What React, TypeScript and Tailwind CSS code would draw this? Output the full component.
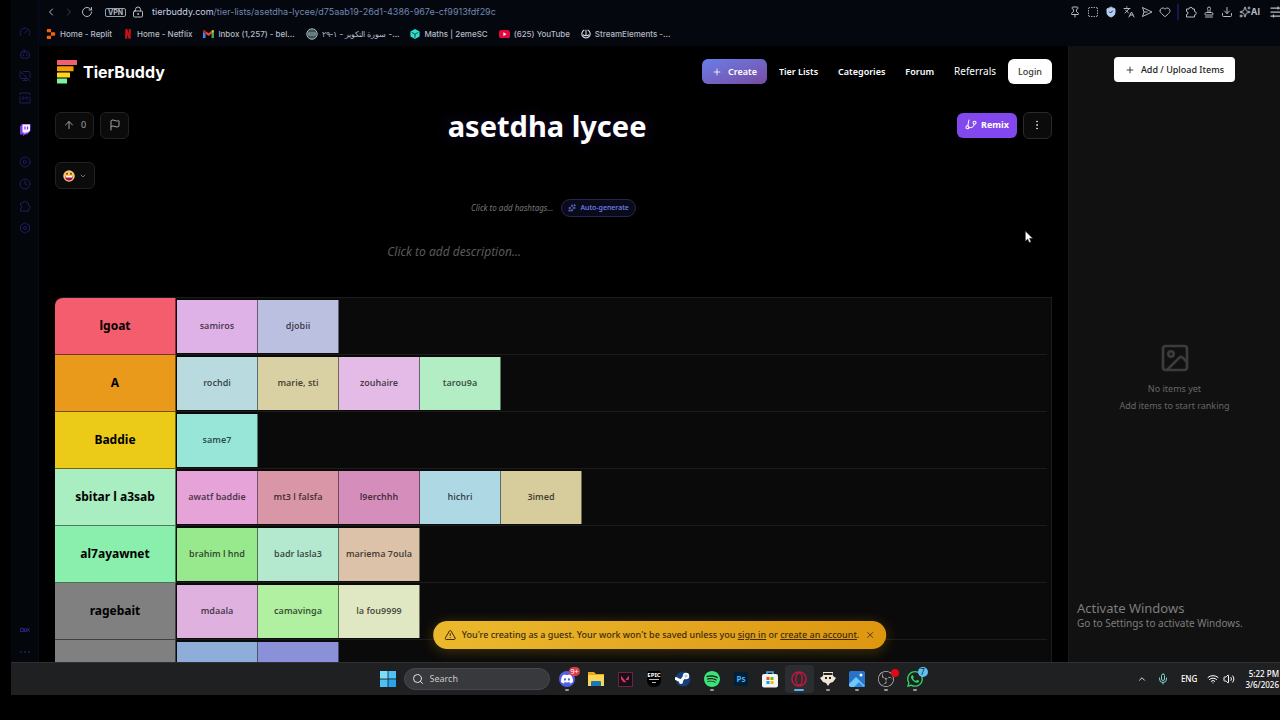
import type { ReactNode } from "react";
import {
  AlertTriangle,
  ArrowUp,
  Bot,
  ChevronDown,
  ChevronLeft,
  ChevronRight,
  ChevronUp,
  CirclePlay,
  Clock,
  Download,
  EllipsisVertical,
  Flag,
  Gauge,
  GitBranch,
  Heart,
  Hexagon,
  Image as ImageIcon,
  Languages,
  LockKeyhole,
  Mic,
  MonitorOff,
  Pin,
  Plus,
  RotateCw,
  Search,
  ShieldCheck,
  Sparkles,
  SquareDashed,
  Stamp,
  Volume2,
  Wifi,
  X,
} from "lucide-react";
import { SiDiscord, SiNetflix, SiObsstudio, SiReplit, SiSpotify, SiValorant, SiWhatsapp } from "react-icons/si";

interface TierItem {
  name: string;
  color: string;
}

interface Tier {
  label: string;
  color: string;
  items: TierItem[];
}

const tiers: Tier[] = [
  {
    label: "lgoat",
    color: "bg-[#f45d6d]",
    items: [
      { name: "samiros", color: "bg-[#deb2e6]" },
      { name: "djobii", color: "bg-[#bcc0e0]" },
    ],
  },
  {
    label: "A",
    color: "bg-[#ea9a1a]",
    items: [
      { name: "rochdi", color: "bg-[#b9dbe0]" },
      { name: "marie, sti", color: "bg-[#d9d0a3]" },
      { name: "zouhaire", color: "bg-[#e3bbe6]" },
      { name: "tarou9a", color: "bg-[#b2edc4]" },
    ],
  },
  {
    label: "Baddie",
    color: "bg-[#eccb18]",
    items: [{ name: "same7", color: "bg-[#97e6d8]" }],
  },
  {
    label: "sbitar l a3sab",
    color: "bg-[#a8eec1]",
    items: [
      { name: "awatf baddie", color: "bg-[#e5a3d8]" },
      { name: "mt3 l falsfa", color: "bg-[#d996a6]" },
      { name: "l9erchhh", color: "bg-[#d58dbb]" },
      { name: "hichri", color: "bg-[#aed9e4]" },
      { name: "3imed", color: "bg-[#d6cc9c]" },
    ],
  },
  {
    label: "al7ayawnet",
    color: "bg-[#8aefac]",
    items: [
      { name: "brahim l hnd", color: "bg-[#98e98e]" },
      { name: "badr lasla3", color: "bg-[#b4e9d0]" },
      { name: "mariema 7oula", color: "bg-[#dcc2a8]" },
    ],
  },
  {
    label: "ragebait",
    color: "bg-[#808080]",
    items: [
      { name: "mdaala", color: "bg-[#dfb1df]" },
      { name: "camavinga", color: "bg-[#b0f0a0]" },
      { name: "la fou9999", color: "bg-[#dfe8c2]" },
    ],
  },
  {
    label: "allib",
    color: "bg-[#808080]",
    items: [
      { name: "", color: "bg-[#8fadd9]" },
      { name: "", color: "bg-[#8b91d9]" },
    ],
  },
];

function GmailIcon() {
  return (
    <svg viewBox="0 0 24 18" className="w-[11px]">
      <path d="M0 3v13.500a1.500 1.500 0 0 0 1.500 1.500H5.500V7.500z" fill="#4285f4" />
      <path d="M24 3v13.500a1.500 1.500 0 0 1-1.500 1.500H18.500V7.500z" fill="#34a853" />
      <path d="M5.500 2v6L12 13l6.500-5V2L12 7z" fill="#ea4335" />
      <path d="M0 3c0-3 3-4 5.500-1.500V8L0 4z" fill="#c5221f" />
      <path d="M24 3c0-3-3-4-5.500-1.500V8L24 4z" fill="#fbbc04" />
    </svg>
  );
}

function SiteIcon() {
  return (
    <svg viewBox="0 0 24 24" className="size-3">
      <circle cx="12" cy="12" r="10.500" fill="#3d5257" stroke="#a9b3b3" strokeWidth="2" />
      <path d="M5 9h14v6H5z" fill="#97aaaf" />
      <path d="M7 12h10" stroke="#334448" strokeWidth="2" />
    </svg>
  );
}

function CubeIcon() {
  return (
    <svg viewBox="0 0 24 24" className="size-2.5">
      <path d="M12 0l11 6v12l-11 6-11-6V6z" fill="#2de0cf" />
      <path d="M4 8l8 4.500L20 8M12 12.500V21" stroke="#06302f" strokeWidth="2" fill="none" />
    </svg>
  );
}

function YoutubeIcon() {
  return (
    <svg viewBox="0 0 24 18" className="w-[11px]">
      <rect width="24" height="18" rx="5" fill="#e4063c" />
      <path d="M9.500 5v8l7-4z" fill="#fff" />
    </svg>
  );
}

function StreamElementsIcon() {
  return (
    <svg viewBox="0 0 24 24" className="size-2.5" fill="none" stroke="#e5e7eb" strokeWidth="2.500">
      <path d="M8 2.500a10 10 0 1 0 8 0M12 2v13M5 13c2 4 12 4 14 0" />
    </svg>
  );
}

const bookmarks: { title: string; icon: ReactNode }[] = [
  { title: "Home - Replit", icon: <SiReplit className="size-2.5 text-[#f26207]" /> },
  { title: "Home - Netflix", icon: <SiNetflix className="size-2.5 text-[#d3101b]" /> },
  { title: "Inbox (1,257) - bel...", icon: <GmailIcon /> },
  { title: "سورة التكوير - ١-٢٩ -...", icon: <SiteIcon /> },
  { title: "Maths | 2emeSC", icon: <CubeIcon /> },
  { title: "(625) YouTube", icon: <YoutubeIcon /> },
  { title: "StreamElements -...", icon: <StreamElementsIcon /> },
];

function TwitchIcon() {
  return (
    <svg viewBox="0 0 24 24" className="size-3">
      <path d="M2 5l4-5h17v14l-7 7h-4l-4 3v-3H2z" fill="#7c3aed" />
      <path d="M7 1h15v12l-4 4h-4l-3 3v-3H7z" fill="#f5f0ff" />
      <path d="M12 5v6M17 5v6" stroke="#7c3aed" strokeWidth="2.500" />
    </svg>
  );
}

function MediumBoxIcon() {
  return (
    <svg viewBox="0 0 24 24" className="size-3" fill="none" stroke="currentColor" strokeWidth="2">
      <path d="M2 6V2h20v4M2 9v13h20V9M8 16V9l4 4 4-4v7" />
    </svg>
  );
}

function ExtensionIcon() {
  return (
    <svg viewBox="0 0 24 24" className="size-3" fill="none" stroke="currentColor" strokeWidth="2" strokeLinejoin="round">
      <path d="M3 6h5a3.500 3.500 0 0 1 7 0h4v5a3.500 3.500 0 0 1 0 7v4H3v-5a3 3 0 0 0 0-6z" />
    </svg>
  );
}

function SendIcon() {
  return (
    <svg viewBox="0 0 24 24" className="size-3" fill="none" stroke="currentColor" strokeWidth="2" strokeLinejoin="round">
      <path d="M3 3l19 9-19 9 3-9zM6 12h7" />
    </svg>
  );
}

function MenuIcon() {
  return (
    <svg viewBox="0 0 24 24" className="size-3" fill="none" stroke="currentColor" strokeWidth="2.500">
      <path d="M1 4h22M1 12h22M1 20h22M16 1v6M7 17v6" />
    </svg>
  );
}

function SideBar() {
  return (
    <aside className="flex w-7 shrink-0 flex-col items-center gap-2.5 border-r border-[#080a20] bg-[#03060b] pt-[26px] pb-1 text-[#241a63]">
      <Gauge className="size-3" />
      <Bot className="size-3" />
      <MonitorOff className="size-3" />
      <MediumBoxIcon />
      <div className="my-2.5">
        <TwitchIcon />
      </div>
      <CirclePlay className="size-3" />
      <Clock className="size-3" />
      <ExtensionIcon />
      <div className="relative size-3">
        <Hexagon className="size-3" />
        <span className="absolute inset-1 rounded-full border border-[#241a63]" />
      </div>
      <svg viewBox="0 0 24 12" className="mt-auto h-3 w-2.5" fill="none" stroke="#3a2a9c" strokeWidth="2">
        <path d="M1 2h7v8H1zM11 2v8h4V2M17 2l6 8M23 2l-6 8" />
      </svg>
      <svg viewBox="0 0 12 12" className="size-3" fill="#3a2a9c">
        <circle cx="2" cy="6" r="0.800" />
        <circle cx="6" cy="6" r="0.800" />
        <circle cx="10" cy="6" r="0.800" />
      </svg>
    </aside>
  );
}

function BrowserBar() {
  return (
    <header className="overflow-hidden bg-[#04080e] pt-0.5 pb-0.5 font-[Inter,'Noto_Sans',sans-serif] text-[#b6bac4]">
      <div className="flex h-5 items-center pl-1.5">
        <div className="flex items-center gap-1.5">
          <ChevronLeft className="size-3" />
          <ChevronRight className="size-3 text-[#3b3f48]" />
          <RotateCw className="size-3" />
        </div>
        <span className="ml-3 rounded-xs border border-[#9ca0aa] px-0.5 text-[7px] leading-[7px] font-bold">VPN</span>
        <LockKeyhole className="ml-1.5 size-3" />
        <span className="ml-2 text-[9px] whitespace-nowrap text-[#7286b0]">
          <span className="text-[#c9d2e4]">tierbuddy.com</span>/tier-lists/asetdha-lycee/d75aab19-26d1-4386-967e-cf9913fdf29c
        </span>
        <div className="ml-auto flex items-center gap-1.5">
          <Pin className="size-3" />
          <SquareDashed className="size-3" />
          <ShieldCheck className="size-3 fill-[#b4cdf0] text-[#b4cdf0] [&>path:last-child]:stroke-[#123]" />
          <Languages className="size-3" />
          <SendIcon />
          <Heart className="size-3" />
          <span className="h-4 w-0.5 bg-[#1d1550]" />
          <ExtensionIcon />
          <Stamp className="size-3" />
          <Download className="size-3" />
          <span className="flex items-center text-[9px] font-bold">
            <Sparkles className="size-3" />
            AI
          </span>
          <span className="ml-1 w-2.5 overflow-hidden">
            <MenuIcon />
          </span>
        </div>
      </div>
      <nav className="mt-0.5 flex h-5 items-center gap-[11px] pl-[7px] text-[8px] font-medium whitespace-nowrap">
        {bookmarks.map((b) => (
          <a key={b.title} href="#" className="flex items-center gap-1">
            {b.icon}
            <span>{b.title}</span>
          </a>
        ))}
      </nav>
    </header>
  );
}

function Logo() {
  return (
    <a href="#" className="flex items-center gap-1.5 pl-0.5 font-[Inter,sans-serif] text-[16px] leading-6 font-bold text-white">
      <svg viewBox="0 0 20 24" className="h-6 w-5">
        <rect y="0" width="20" height="5" rx="0.500" fill="#f0606e" />
        <rect y="6.200" width="16.500" height="5" rx="0.500" fill="#f59e0b" />
        <rect y="12.400" width="13" height="5" rx="0.500" fill="#fcd71c" />
        <rect y="18.600" width="10" height="5" rx="0.500" fill="#7df29b" />
      </svg>
      TierBuddy
    </a>
  );
}

function NavBar() {
  return (
    <div className="flex items-center justify-between">
      <Logo />
      <nav className="flex items-center gap-3 text-[9px] font-semibold text-white">
        <button className="flex h-[25px] items-center gap-1.5 rounded-md bg-linear-to-br from-[#667eea] to-[#764ba2] px-2.5">
          <Plus className="size-2.5" />
          Create
        </button>
        <div className="flex items-center gap-5">
          <a href="#">Tier Lists</a>
          <a href="#">Categories</a>
          <a href="#">Forum</a>
          <a href="#" className="text-[10px] font-normal">
            Referrals
          </a>
        </div>
        <button className="h-[25px] rounded-md bg-white px-2.5 font-medium text-[#333]">Login</button>
      </nav>
    </div>
  );
}

function TierRow({ tier }: { tier: Tier }) {
  return (
    <div className="flex h-[57px] shrink-0">
      <div className={`flex w-[121px] shrink-0 items-center justify-center border-b border-r border-black/50 text-[12px] font-bold text-black ${tier.color}`}>
        {tier.label}
      </div>
      <div className="flex flex-1 items-center border-b border-[#1c1c1c] pl-px">
        {tier.items.map((item, i) => (
          <div key={i} className={`flex h-[53px] w-[81px] items-center justify-center border-r border-black/50 text-[9px] font-semibold whitespace-nowrap text-black/70 ${item.color}`}>
            {item.name}
          </div>
        ))}
      </div>
    </div>
  );
}

function Editor() {
  return (
    <main className="flex min-w-0 flex-1 flex-col overflow-hidden bg-black px-4 pt-[13px]">
      <NavBar />
      <div className="mt-5 flex items-center justify-between text-[9px]">
        <div className="flex gap-1.5 text-[#a3a3a3]">
          <button className="flex h-[27px] items-center gap-1.5 rounded-md border border-[#222] bg-[#0b0b0b] px-[7px]">
            <ArrowUp className="size-3" />
            0
          </button>
          <button aria-label="Report" className="flex h-[27px] w-[29px] items-center justify-center rounded-md border border-[#222] bg-[#0b0b0b]">
            <Flag className="size-3" />
          </button>
        </div>
        <h1 className="pt-0.5 pl-2 text-[29px] leading-10 font-bold text-white [text-shadow:0_0_16px_#4c2a9a60]">asetdha lycee</h1>
        <div className="flex items-center gap-1.5">
          <button className="flex h-[25px] items-center gap-1 rounded-md bg-[#8347ee] px-2 font-bold text-white">
            <GitBranch className="size-3 rotate-12" />
            Remix
          </button>
          <button aria-label="More" className="flex h-[27px] w-[29px] items-center justify-center rounded-md border border-[#2a2a2a] bg-[#0b0b0b] text-[#d4d4d4]">
            <EllipsisVertical className="size-3" />
          </button>
        </div>
      </div>
      <button aria-label="Reaction" className="mt-4 flex h-[27px] w-10 shrink-0 items-center justify-center gap-1 rounded-md border border-[#222] bg-[#0b0b0b] text-[#a3a3a3]">
        <svg viewBox="0 0 24 24" className="size-3">
          <circle cx="12" cy="12" r="11.500" fill="#f7c567" />
          <path d="M4 12h16c0 6-3.500 9-8 9s-8-3-8-9z" fill="#a50f4c" />
          <path d="M5 12h14v3H5z" fill="#fff" />
          <circle cx="8" cy="7.500" r="1.800" fill="#5a3413" />
          <circle cx="16" cy="7.500" r="1.800" fill="#5a3413" />
        </svg>
        <ChevronDown className="size-2" />
      </button>
      <div className="mt-2.5 flex items-center justify-center gap-2 text-[8px]">
        <span className="text-[#777] italic">Click to add hashtags...</span>
        <button className="flex h-[18px] items-center gap-1 rounded-full border border-[#2b2450] bg-[#0a0b1a] px-1.5 text-[7px] font-medium text-[#7683f5]">
          <Sparkles className="size-2" />
          Auto-generate
        </button>
      </div>
      <p className="mx-auto mt-[25px] w-1/3 text-[12px] leading-5 text-[#5a5a5a] italic">Click to add description...</p>
      <section className="mt-[35px] flex flex-col overflow-hidden rounded-tl-lg border-t border-r border-[#1c1c1c] bg-[#0a0a0a] pr-1">
        {tiers.map((tier) => (
          <TierRow key={tier.label} tier={tier} />
        ))}
      </section>
    </main>
  );
}

function ItemsPanel() {
  return (
    <aside className="flex w-[212px] shrink-0 flex-col border-l border-[#1a1a1a] bg-[#111] pt-[11px]">
      <button className="mx-auto flex h-[25px] items-center gap-1.5 rounded bg-white px-[11px] text-[9px] font-medium text-[#222]">
        <Plus className="size-2.5" />
        Add / Upload Items
      </button>
      <div className="flex flex-1 flex-col items-center justify-center pt-3 text-[9px] leading-[17px] text-[#666]">
        <ImageIcon className="mb-1.5 size-8 text-[#3c3c3c]" />
        <p>No items yet</p>
        <p>Add items to start ranking</p>
      </div>
    </aside>
  );
}

function GuestBanner() {
  return (
    <div className="absolute bottom-[13px] left-1/2 flex h-7 -translate-x-1/2 items-center rounded-full bg-linear-to-r from-[#ebb92c] to-[#dd960f] px-[11px] text-[9px] font-medium whitespace-nowrap text-[#3d2c08] shadow-[0_2px_14px_#eab30840]">
      <AlertTriangle className="mr-1.5 size-3" />
      <p>
        You're creating as a guest. Your work won't be saved unless you{" "}
        <a href="#" className="underline">
          sign in
        </a>{" "}
        or{" "}
        <a href="#" className="underline">
          create an account
        </a>
        .
      </p>
      <button aria-label="Dismiss" className="ml-1.5">
        <X className="size-2.5" />
      </button>
    </div>
  );
}

function TaskIcon({ children, running, active }: { children: ReactNode; running?: boolean; active?: boolean }) {
  return (
    <div className={`relative flex h-7 w-[29px] items-center justify-center rounded ${active ? "bg-[#2c2d31]" : ""}`}>
      {children}
      {running && <span className="absolute bottom-0.5 h-0.5 w-1 rounded-full bg-[#9a9a9a]" />}
      {active && <span className="absolute bottom-0.5 h-0.5 w-2.5 rounded-full bg-[#5ab4f0]" />}
    </div>
  );
}

function TaskBar() {
  return (
    <footer className="flex h-[33px] shrink-0 items-center border-t border-[#2f3032] bg-[#1f2022] pl-[18px] text-[8px] text-white">
      <div className="flex-1" />
      <div className="flex items-center">
        <svg viewBox="0 0 16 16" className="size-4" fill="#4cc2f5">
          <path d="M0 0h7.600v7.600H0z" fill="#7ddcf8" />
          <path d="M8.400 0H16v7.600H8.400zM0 8.400h7.600V16H0z" />
          <path d="M8.400 8.400H16V16H8.400z" fill="#26a5ee" />
        </svg>
        <label className="mr-[3px] ml-2 flex h-[22px] w-[146px] items-center gap-1.5 rounded-full border border-[#47484b] bg-[#38393c] px-[7px]">
          <Search className="size-3 shrink-0 text-[#e5e5e5]" />
          <input aria-label="Search" placeholder="Search" className="w-full min-w-0 bg-transparent text-[9px] outline-none placeholder:text-[#c9c9c9]" />
        </label>
        <div className="flex">
          <TaskIcon running>
            <span className="flex size-4 items-center justify-center rounded-full bg-[#5160e8]">
              <SiDiscord className="size-3" />
            </span>
            <span className="absolute top-0.5 right-0.5 rounded-full bg-[#dc3d4d] px-px text-[7px] leading-[9px]">9+</span>
          </TaskIcon>
          <TaskIcon>
            <svg viewBox="0 0 18 16" className="h-4 w-[18px]">
              <path d="M1 1h6l2 2h8v12H1z" fill="#e8a820" />
              <path d="M1 4h16v11H1z" fill="#fbd654" />
              <path d="M4 15v-4q0-1 1-1h8q1 0 1 1v4z" fill="#1878b8" />
            </svg>
          </TaskIcon>
          <TaskIcon>
            <span className="flex size-[15px] items-center justify-center border border-[#6d2342] bg-[#17101b]">
              <SiValorant className="size-2 text-[#e6355b]" />
            </span>
          </TaskIcon>
          <TaskIcon>
            <span className="flex h-4 w-3.5 flex-col items-center rounded-t-xs rounded-b-md bg-black pt-px">
              <span className="text-[6px] leading-[7px] font-bold">EPIC</span>
              <span className="h-px w-2.5 bg-[#bbb]" />
              <span className="mt-0.5 h-px w-1 bg-[#bbb]" />
            </span>
          </TaskIcon>
          <TaskIcon>
            <svg viewBox="0 0 16 16" className="size-4">
              <circle cx="8" cy="8" r="7.500" fill="#15407a" />
              <path d="M0 7l6 3 4-5" fill="none" stroke="#fff" strokeWidth="3" />
              <circle cx="11" cy="5" r="3.200" fill="#fff" />
              <circle cx="11" cy="5" r="1.600" fill="#b8c4d8" />
              <circle cx="6" cy="11" r="2" fill="#fff" />
            </svg>
          </TaskIcon>
          <TaskIcon running>
            <SiSpotify className="size-4 text-[#3be477]" />
          </TaskIcon>
          <TaskIcon>
            <span className="flex size-3.5 items-center justify-center rounded-xs bg-[#001e36] text-[8px] font-bold text-[#4bb3f8]">Ps</span>
          </TaskIcon>
          <TaskIcon>
            <svg viewBox="0 0 16 17" className="h-[17px] w-4">
              <path d="M5 4V1h6v3" fill="none" stroke="#3fb4ea" strokeWidth="1.500" />
              <rect y="3" width="16" height="13.500" rx="2" fill="#f3f3f3" />
              <path d="M4.500 6h3v3h-3z" fill="#f25022" />
              <path d="M8.500 6h3v3h-3z" fill="#7fba00" />
              <path d="M4.500 10h3v3h-3z" fill="#00a4ef" />
              <path d="M8.500 10h3v3h-3z" fill="#ffb900" />
            </svg>
          </TaskIcon>
          <TaskIcon active>
            <svg viewBox="0 0 16 16" className="size-4" fill="none" stroke="#c0173f">
              <circle cx="8" cy="8" r="7" strokeWidth="1.600" />
              <ellipse cx="8" cy="8" rx="3.200" ry="6" strokeWidth="1.400" />
            </svg>
          </TaskIcon>
          <TaskIcon running>
            <svg viewBox="0 0 16 16" className="size-4">
              <path d="M3 1h10v4l3 2-3 4-3 1-2 3-2-3-3-1-3-4 3-2z" fill="#efe6d3" />
              <path d="M3.500 2h9v2h-9zM5 6h2v2H5zM9 6h2v2H9z" fill="#27231f" />
            </svg>
          </TaskIcon>
          <TaskIcon running>
            <svg viewBox="0 0 16 16" className="size-4">
              <rect width="16" height="16" rx="2" fill="#2673c9" />
              <path d="M0 13l7-7 9 9q-1 1-2 1H2q-2 0-2-2z" fill="#6fc8fa" />
              <path d="M5 16l5-5 5 5z" fill="#2b8be0" />
              <circle cx="12" cy="4" r="1.500" fill="#fff" />
            </svg>
          </TaskIcon>
          <TaskIcon running>
            <SiObsstudio className="size-4 text-[#b9b9b9]" />
            <span className="absolute top-1 right-0.5 size-2 rounded-full bg-[#e30613]" />
          </TaskIcon>
          <TaskIcon running>
            <SiWhatsapp className="size-4 text-[#2fd366]" />
            <span className="absolute top-0.5 right-0.5 size-2.5 rounded-full bg-[#5fc0f2] text-center text-[8px] leading-[10px] text-[#123]">7</span>
          </TaskIcon>
        </div>
      </div>
      <div className="flex flex-1 items-center justify-end">
        <ChevronUp className="size-2.5" />
        <Mic className="ml-2.5 size-3 text-[#7fd0cc]" />
        <span className="ml-3 font-medium">ENG</span>
        <Wifi className="ml-2.5 size-3" />
        <Volume2 className="ml-1 size-3" />
        <div className="ml-2.5 pr-px text-right leading-[11px] font-medium whitespace-nowrap">
          <div>5:22 PM</div>
          <div>3/6/2026</div>
        </div>
      </div>
    </footer>
  );
}

export default function App() {
  return (
    <div className="relative flex h-screen flex-col overflow-hidden bg-black pb-[25px] pl-[11px] font-['Noto_Sans','Open_Sans',sans-serif]">
      <div className="flex min-h-0 flex-1">
        <SideBar />
        <div className="flex min-w-0 flex-1 flex-col">
          <BrowserBar />
          <div className="relative flex min-h-0 flex-1">
            <Editor />
            <ItemsPanel />
            <GuestBanner />
            <div className="absolute right-0 bottom-8 w-[203px] text-[#7d7d7d]">
              <div className="text-[13px] leading-4">Activate Windows</div>
              <div className="text-[10px] leading-[14px] whitespace-nowrap">Go to Settings to activate Windows.</div>
            </div>
            <svg viewBox="0 0 9 14" className="absolute top-[184px] right-[247px] h-3.5 w-2">
              <path d="M0.500 0.500v11l2.600-2.300 1.700 4 1.800-0.800-1.700-3.900h3.600z" fill="#fff" stroke="#444" strokeWidth="0.500" />
            </svg>
          </div>
        </div>
      </div>
      <TaskBar />
    </div>
  );
}
